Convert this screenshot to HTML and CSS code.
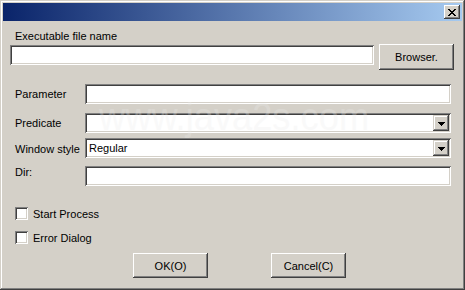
FILE: index.html
```html
<!DOCTYPE html>
<html lang="en">
<head>
  <meta charset="UTF-8" />
  <title>Run Program</title>
  <link rel="stylesheet" href="styles.css">
</head>
<body>
  <div class="window">
    <div class="titlebar">
      <button class="close-btn">
        <svg width="8" height="7" viewBox="0 0 8 7"><path d="M0 0h2v1H0zM6 0h2v1H6zM1 1h2v1H1zM5 1h2v1H5zM2 2h4v1H2zM3 3h2v1H3zM2 4h4v1H2zM1 5h2v1H1zM5 5h2v1H5zM0 6h2v1H0zM6 6h2v1H6z" fill="#000"/></svg>
      </button>
    </div>

    <div class="file-label">Executable file name</div>
    <div class="file-row">
      <input class="field file-field" type="text">
      <button class="btn browse-btn">Browser.</button>
    </div>

    <div class="form-row row-param">
      <label>Parameter</label>
      <input class="field" type="text">
    </div>
    <div class="form-row row-pred">
      <label>Predicate</label>
      <div class="field combo">
        <span class="combo-text"></span>
        <span class="drop-btn"><svg width="7" height="4" viewBox="0 0 7 4"><path d="M0 0h7v1H0zM1 1h5v1H1zM2 2h3v1H2zM3 3h1v1H3z" fill="#000"/></svg></span>
      </div>
    </div>
    <div class="form-row row-style">
      <label>Window style</label>
      <div class="field combo">
        <span class="combo-text">Regular</span>
        <span class="drop-btn"><svg width="7" height="4" viewBox="0 0 7 4"><path d="M0 0h7v1H0zM1 1h5v1H1zM2 2h3v1H2zM3 3h1v1H3z" fill="#000"/></svg></span>
      </div>
    </div>
    <div class="form-row row-dir">
      <label class="dir-label">Dir:</label>
      <input class="field" type="text">
    </div>

    <div class="check-row row-start">
      <input type="checkbox" id="start"><label for="start">Start Process</label>
    </div>
    <div class="check-row row-error">
      <input type="checkbox" id="error"><label for="error">Error Dialog</label>
    </div>

    <div class="btn-row">
      <button class="btn">OK(O)</button>
      <button class="btn">Cancel(C)</button>
    </div>

    <div class="watermark">www.java2s.com</div>
  </div>
</body>
</html>
```

FILE: styles.css
```css
body {
  margin: 0;
  font-family: "Liberation Sans", Arial, sans-serif;
  font-size: 11px;
  color: #000;
}

.window {
  position: relative;
  width: 465px;
  height: 290px;
  box-sizing: border-box;
  padding: 3px;
  background: #d4d0c8;
  box-shadow: inset -1px -1px #404040, inset 1px 1px #d4d0c8,
              inset -2px -2px #808080, inset 2px 2px #fff;
}

.titlebar {
  height: 18px;
  display: flex;
  justify-content: flex-end;
  align-items: center;
  padding-right: 2px;
  background: linear-gradient(to right, #0a246a, #a6caf0);
}

.close-btn {
  width: 16px;
  height: 14px;
  padding: 0;
  border: none;
  display: flex;
  align-items: center;
  justify-content: center;
  background: #d4d0c8;
  box-shadow: inset -1px -1px #404040, inset 1px 1px #fff,
              inset -2px -2px #808080;
}

.btn {
  width: 75px;
  height: 25px;
  padding: 0;
  border: none;
  background: #d4d0c8;
  font-family: inherit;
  font-size: 11px;
  color: #000;
  box-shadow: inset -1px -1px #404040, inset 1px 1px #fff,
              inset -2px -2px #808080;
}

.field {
  box-sizing: border-box;
  height: 20px;
  border: none;
  margin: 0;
  padding: 2px 4px;
  background: #fff;
  font-family: inherit;
  font-size: 11px;
  box-shadow: inset 1px 1px #808080, inset -1px -1px #fff,
              inset 2px 2px #404040, inset -2px -2px #d4d0c8;
}

.file-label {
  margin-top: 9px;
  padding-left: 12px;
  line-height: 13px;
}

.file-row {
  display: flex;
  align-items: flex-start;
  gap: 5px;
  margin-top: 1px;
  padding-left: 7px;
}

.file-field {
  width: 364px;
  margin-top: 1px;
}

.browse-btn {
  height: 26px;
}

.form-row {
  display: flex;
  align-items: center;
  padding-left: 12px;
}

.form-row label {
  width: 70px;
}

.form-row .field {
  width: 366px;
}

.row-param { margin-top: 14px; }
.row-pred { margin-top: 9px; }
.row-style { margin-top: 5px; }
.row-dir { margin-top: 8px; }

.row-style label {
  padding-top: 2px;
}

.dir-label {
  align-self: flex-start;
  padding-top: 0;
}

.combo {
  display: flex;
  justify-content: space-between;
  align-items: center;
  padding: 2px;
}

.combo-text {
  padding-left: 2px;
}

.drop-btn {
  width: 16px;
  height: 16px;
  display: flex;
  align-items: center;
  justify-content: center;
  background: #d4d0c8;
  box-shadow: inset -1px -1px #404040, inset 1px 1px #d4d0c8,
              inset -2px -2px #808080, inset 2px 2px #fff;
}

.drop-btn svg {
  margin-top: 1px;
}

.check-row {
  display: flex;
  align-items: center;
  padding-left: 12px;
  height: 13px;
}

.check-row input {
  appearance: none;
  width: 13px;
  height: 13px;
  margin: 0 5px 0 0;
  background: #fff;
  box-shadow: inset 1px 1px #808080, inset -1px -1px #fff,
              inset 2px 2px #404040, inset -2px -2px #d4d0c8;
}

.row-start { margin-top: 21px; }
.row-error { margin-top: 11px; }

.btn-row {
  display: flex;
  gap: 63px;
  margin-top: 9px;
  padding-left: 130px;
}

.watermark {
  position: absolute;
  left: 99px;
  top: 97px;
  font-size: 39px;
  line-height: 39px;
  white-space: nowrap;
  color: #ebebeb;
  opacity: 0.28;
  transform: scaleX(0.93);
  transform-origin: left top;
  pointer-events: none;
}
```
